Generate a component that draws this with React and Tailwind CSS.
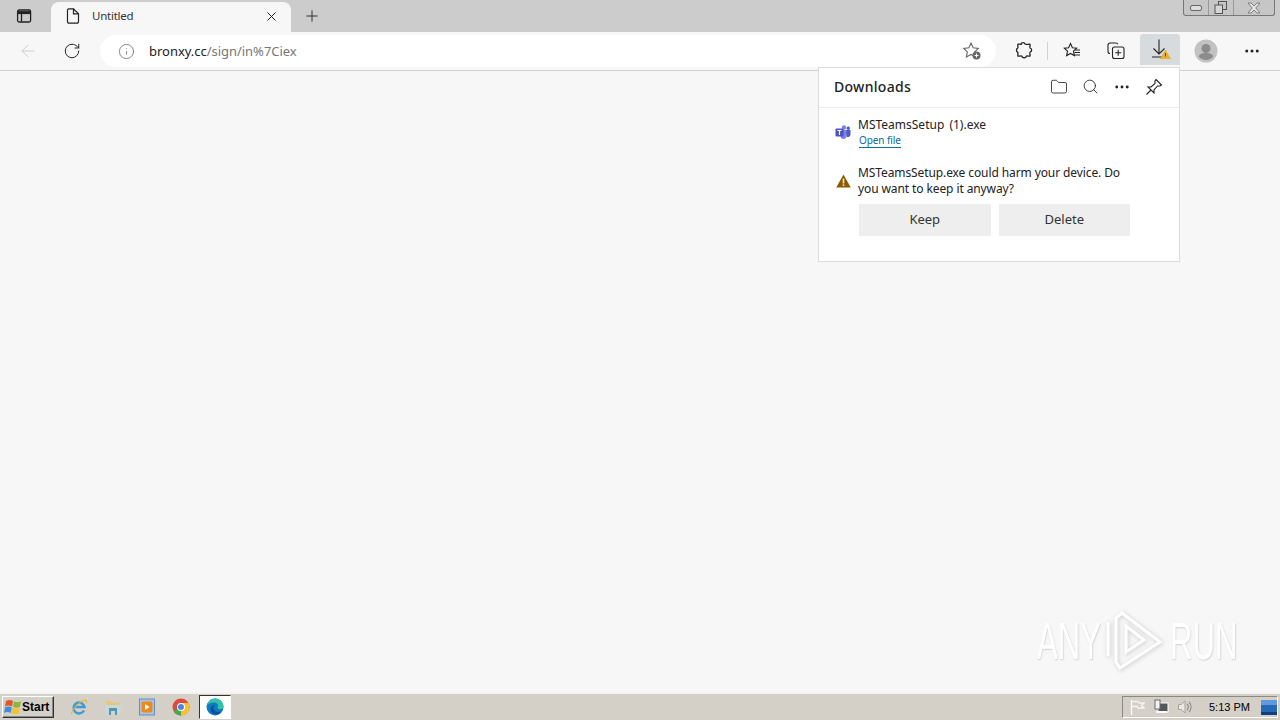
import { Plus, ArrowLeft, RotateCw, Info, MoreHorizontal, Search, Folder, X } from 'lucide-react';

const font = { fontFamily: '"Noto Sans", sans-serif' };

const TeamsIcon = () => (
  <svg width="16" height="14" viewBox="0 0 16 14">
    <circle cx="9" cy="2.5" r="2.2" fill="#7b83eb" />
    <circle cx="13.3" cy="3.2" r="1.7" fill="#5059c9" />
    <path d="M10 5h5.500v4.500a2.500 2.500 0 0 1-4 2z" fill="#5059c9" />
    <path d="M5 5h6.500v6a3 3 0 0 1-6 0z" fill="#7b83eb" />
    <rect x="0.5" y="3.5" width="8" height="8" rx="1" fill="#4b53bc" />
    <path d="M2.500 5.500h4M4.500 5.500v4.500" stroke="#fff" strokeWidth="1.2" />
  </svg>
);

const WarnIcon = () => (
  <svg width="15" height="14" viewBox="0 0 15 14">
    <path d="M7.500 .5L14.800 13.500H.2z" fill="#8a5a00" />
    <rect x="6.700" y="4.500" width="1.600" height="5" fill="#f6e7c0" />
    <rect x="6.700" y="10.400" width="1.600" height="1.600" fill="#f6e7c0" />
  </svg>
);

const TabPageIcon = () => (
  <svg width="14" height="16" viewBox="0 0 14 16" fill="none" stroke="#222" strokeWidth="1.2">
    <path d="M1.500 2.200a1.400 1.400 0 0 1 1.400-1.400h4.600l5 5v8a1.400 1.400 0 0 1-1.400 1.400H2.900a1.400 1.400 0 0 1-1.400-1.400z" />
    <path d="M7.500 .8v5h5" />
  </svg>
);

const TabsIcon = () => (
  <svg width="16" height="14" viewBox="0 0 16 14" fill="none" stroke="#222" strokeWidth="1.3">
    <rect x="1.600" y="1" width="13" height="12" rx="1.500" />
    <path d="M1.600 3.600h13" strokeWidth="3" />
    <path d="M5.500 4v9" />
  </svg>
);

const FavAddIcon = () => (
  <svg width="20" height="20" viewBox="0 0 20 20" fill="none">
    <path d="M9 2l2.200 4.800 5.100.6-3.700 3.500 1 5-4.600-2.500-4.600 2.500 1-5L1.700 7.400l5.100-.6z" stroke="#666" strokeWidth="1.1" />
    <circle cx="14.500" cy="14.500" r="4" fill="#666" />
    <path d="M12.500 14.500h4M14.500 12.500v4" stroke="#fff" strokeWidth="1.1" />
  </svg>
);

const ExtensionIcon = () => (
  <svg width="20" height="20" viewBox="0 0 20 20" fill="none" stroke="#222" strokeWidth="1.3">
    <path d="M7 3.200a2.200 2.200 0 0 1 4.200 0c.2.800 4.300-.4 4.800 0 .4.500-.6 3.300.1 3.800a2.200 2.200 0 0 1 0 4.200c-.7.500.3 3.300-.1 3.800-.5.400-2.800-.3-3.500 0a2.500 2.500 0 0 1-4.800 0c-.7-.3-3.300.4-3.800 0-.4-.5.400-3-.1-3.700a2.400 2.400 0 0 1 0-4.300c.5-.7-.3-3.300.1-3.800.5-.4 2.900.3 3.900-.2z" />
  </svg>
);

const FavListIcon = () => (
  <svg width="18" height="18" viewBox="0 0 18 18" fill="none" stroke="#222" strokeWidth="1.1">
    <path d="M7.500 1.500l1.900 4.200 4.300.5-3.200 3 .9 4.400-3.900-2.200-3.900 2.200.9-4.400-3.200-3 4.300-.5z" />
    <path d="M12 8h5M11.500 10.500h5.500M11 13h6" />
  </svg>
);

const CollectionsIcon = () => (
  <svg width="18" height="18" viewBox="0 0 18 18" fill="none" stroke="#222" strokeWidth="1.1">
    <path d="M3 11.500A2 2 0 0 1 1 9.500V3a2 2 0 0 1 2-2h6a2 2 0 0 1 1.800 1.200" />
    <rect x="5.500" y="5" width="11.500" height="11.500" rx="2" />
    <path d="M11.200 7.800v6M8.200 10.800h6" />
  </svg>
);

const DownloadWarn = () => (
  <svg width="22" height="22" viewBox="0 0 22 22" fill="none">
    <path d="M9 1.500v14M3.500 10.500L9 16l5.500-5.500M2 19h14" stroke="#222" strokeWidth="1.1" />
    <path d="M15.500 11.500l5.500 9.500H10z" fill="#eab12c" />
    <rect x="15" y="15" width="1" height="3.500" fill="#6b4a00" />
  </svg>
);

const PinIcon = () => (
  <svg width="18" height="18" viewBox="0 0 18 18" fill="none" stroke="#222" strokeWidth="1.1">
    <path d="M11 1.500L16.500 7 15 8l-2.500 0L9 12v3L3 9h3l4-3.500V3z" />
    <path d="M6 12l-4.500 4.500" />
  </svg>
);

const Avatar = () => (
  <svg width="24" height="24" viewBox="0 0 24 24">
    <circle cx="12" cy="12" r="11.500" fill="#c2c2c2" />
    <circle cx="12" cy="9.500" r="4.500" fill="#8c8c8c" />
    <path d="M4.600 17.500c1-2.600 3.800-3.500 7.400-3.500s6.400.9 7.400 3.500c-1.800 2.300-4.400 3.500-7.400 3.500s-5.600-1.200-7.400-3.500z" fill="#8c8c8c" />
  </svg>
);

const WinLogo = () => (
  <svg width="18" height="16" viewBox="0 0 18 16">
    <path d="M2 2c2.500-1.300 4.600-1.300 7 0L8 7.500C5.600 6.300 3.500 6.300 1 7.500z" fill="#e2552b" />
    <path d="M10 2.300c2.400 1.200 4.600 1.200 7 0l-1 5.500c-2.400 1.200-4.600 1.200-7 0z" fill="#8cb53a" />
    <path d="M1 8.500c2.500-1.200 4.400-1.200 6.800 0l-1 5.500c-2.400-1.200-4.400-1.200-6.800 0z" fill="#3f8ed8" />
    <path d="M8.800 8.700c2.400 1.200 4.600 1.200 7 0l-1 5.500c-2.400 1.200-4.600 1.200-7 0z" fill="#f2c230" />
  </svg>
);

const IeIcon = () => (
  <svg width="18" height="18" viewBox="0 0 18 18" fill="none">
    <path d="M14 12.500A5.500 5.500 0 1 1 14.500 9H4" stroke="#3d9ad6" strokeWidth="2.400" />
    <path d="M2 16c-1.500-2 6-12 13-14 2-.5 2 2 1 3" stroke="#e3b23c" strokeWidth="1.100" />
  </svg>
);

const ExplorerIcon = () => (
  <svg width="18" height="18" viewBox="0 0 18 18">
    <path d="M2 3h5l1 1.500h8V10H2z" fill="#e6c878" />
    <path d="M1 7h16l-1 10H2z" fill="#c4dadd" />
    <path d="M5 10h8v7h-2v-4H7v4H5z" fill="#5b93ad" />
  </svg>
);

const MediaIcon = () => (
  <svg width="16" height="18" viewBox="0 0 16 18">
    <rect x="0.5" y="1" width="15" height="16" fill="#a8c4e4" stroke="#5f8fc4" />
    <rect x="2.500" y="3.500" width="11" height="11" rx="2" fill="#ee8a1c" />
    <path d="M6 6l4.500 3L6 12z" fill="#fff" />
  </svg>
);

const ChromeIcon = () => (
  <svg width="18" height="18" viewBox="0 0 18 18">
    <circle cx="9" cy="9" r="8.500" fill="#dd4b3e" />
    <path d="M9 9L1.600 13.200A8.500 8.500 0 0 0 9 17.500z" fill="#4aa651" />
    <path d="M9 5h7.500A8.500 8.500 0 0 1 9 17.500z" fill="#f3c432" />
    <circle cx="9" cy="9" r="4" fill="#fff" />
    <circle cx="9" cy="9" r="3" fill="#4a86e0" />
  </svg>
);

const EdgeIcon = () => (
  <svg width="18" height="18" viewBox="0 0 18 18">
    <circle cx="9" cy="9" r="8.500" fill="#0f7ac6" />
    <path d="M1 8C2 3.500 5.200.5 9 .5c4.500 0 8.500 3.400 8.500 8 0 1.800-1.500 2.700-3.200 2.700-1.400 0-2.600-.5-2.600-1.200 0-1.800 1-1.800 0-3.500C10.800 5 9.300 4.500 8 4.500 4.500 4.500 2 6 1 8z" fill="#35c1a5" />
    <path d="M8 16c-2.800-1-4-3.500-3.200-6 .6-1.900 2.200-3 4-3-1.500 1-2 3-.8 5 1.500 2 4.800 2.600 7.400 1.200C14 16 11 17 8 16z" fill="#0b4f96" />
  </svg>
);

const FlagIcon = () => (
  <svg width="16" height="16" viewBox="0 0 16 16" fill="none" stroke="#fff" strokeWidth="1.300">
    <path d="M2.500 1v15" />
    <path d="M3 2.500h6l1 1.500h5l-2.500 2.500L15 9H9L8 7.500H3" stroke="#f4f4f2" />
  </svg>
);

const NetworkIcon = () => (
  <svg width="16" height="16" viewBox="0 0 16 16">
    <rect x="5" y="4" width="10" height="9" fill="#55585a" stroke="#fff" />
    <rect x="2" y="1" width="5" height="9" fill="#f2f2f0" stroke="#66686a" />
    <rect x="3" y="12" width="11" height="2" fill="#fafafa" />
  </svg>
);

const SpeakerIcon = () => (
  <svg width="16" height="16" viewBox="0 0 16 16" fill="none">
    <path d="M1.500 5.500h3L8 2v12l-3.500-3.500h-3z" fill="#e9e8e4" stroke="#a5a39c" />
    <path d="M10 5a4 4 0 0 1 0 6M12 3a7 7 0 0 1 0 10" stroke="#8f8d86" strokeWidth="1.100" />
  </svg>
);

const DesktopIcon = () => (
  <svg width="16" height="15" viewBox="0 0 16 15">
    <rect x="0" y="0" width="16" height="13" fill="#2668b8" />
    <rect x="0" y="0" width="16" height="5" fill="#5f9bdc" />
    <rect x="0" y="12" width="16" height="3" fill="#123f78" />
  </svg>
);

const Watermark = () => (
  <div
    className="absolute left-[1037px] top-[608px] w-[198px] h-[66px] flex items-center pointer-events-none text-white text-[52px] leading-none [text-shadow:1px_1px_2px_#d0d0d0]"
    style={{ fontFamily: '"Liberation Sans", sans-serif' }}
  >
    <span className="w-[69px] scale-x-[0.6] origin-left whitespace-nowrap">ANY</span>
    <svg width="58" height="62" viewBox="0 0 58 62" fill="none" stroke="#fff" strokeWidth="3" className="drop-shadow-[1px_1px_2px_#c8c8c8]">
      <path d="M10 8v44l4 6L54 32 16 3z" />
      <path d="M2 12v34" />
      <path d="M20 16v26l18-12z" />
    </svg>
    <span className="ml-[6px] w-[64px] scale-x-[0.6] origin-left whitespace-nowrap">RUN</span>
  </div>
);

const App = () => {
  return (
    <div className="relative w-[1280px] h-[720px] overflow-hidden flex flex-col bg-[#f7f7f7] text-[#222]" style={font}>
      {/* Tab strip */}
      <div className="h-[32px] bg-[#cccccc] flex items-end shrink-0 relative">
        <div className="w-[51px] h-[32px] flex items-center justify-center pr-[4px] pb-[1px]">
          <TabsIcon />
        </div>
        <div className="w-[240px] h-[30px] bg-[#f7f7f7] rounded-t-[8px] flex items-center pl-[15px] pr-[12px] pb-[2px]">
          <TabPageIcon />
          <span className="ml-[12px] text-[11.5px] tracking-[-0.25px] text-[#333] flex-1">Untitled</span>
          <X size={15} strokeWidth={1.6} color="#222" />
        </div>
        <div className="w-[42px] h-[32px] flex items-center justify-center pb-[1px]">
          <Plus size={18} strokeWidth={1.2} color="#222" />
        </div>
        {/* Window controls */}
        <div className="absolute right-[5px] top-0 h-[16px] w-[92px] flex border border-t-0 border-[#777] rounded-b-[3px] bg-[#c6c6c6]">
          <div className="w-[25px] flex items-center justify-center border-r border-[#999]">
            <div className="w-[12px] h-[6px] border border-[#666] rounded-[2px] bg-[#ddd]" />
          </div>
          <div className="w-[25px] flex items-center justify-center border-r border-[#999] pr-[2px]">
            <svg width="13" height="13" viewBox="0 0 13 13" fill="none" stroke="#555">
              <rect x="4.500" y="0.500" width="8" height="8" />
              <rect x="1" y="4" width="7.500" height="8.500" fill="#d6d6d6" />
            </svg>
          </div>
          <div className="flex-1 flex items-center justify-center">
            <svg width="14" height="12" viewBox="0 0 14 12" fill="#e4e4e4" stroke="#777" strokeWidth="0.9">
              <path d="M1 1h3l3 3 3-3h3L8.800 6 13 11h-3L7 8l-3 3H1l4.200-5z" />
            </svg>
          </div>
        </div>
      </div>

      {/* Toolbar */}
      <div className="h-[39px] shrink-0 bg-[#f7f7f7] border-b border-[#d2d2d2] flex items-center relative">
        <div className="w-[56px] flex justify-center">
          <ArrowLeft size={20} strokeWidth={1.1} color="#c9c9c9" />
        </div>
        <div className="w-[32px] flex justify-center">
          <RotateCw size={18} strokeWidth={1.3} color="#222" />
        </div>
        <div className="ml-[12px] w-[896px] h-[32px] bg-white rounded-full flex items-center pl-[18px] pr-[14px]">
          <Info size={17} strokeWidth={1.1} color="#666" />
          <span className="ml-[14px] text-[13px] flex-1 pt-[1px] tracking-[-0.03px]">
            <span className="text-[#222]">bronxy.cc</span>
            <span className="text-[#777]">/sign/in%7Ciex</span>
          </span>
          <FavAddIcon />
        </div>
        <div className="w-[56px] flex justify-center pr-[1px]">
          <ExtensionIcon />
        </div>
        <div className="w-[1px] h-[18px] bg-[#d2d2d2] -ml-[5px]" />
        <div className="w-[48px] flex justify-center">
          <FavListIcon />
        </div>
        <div className="w-[40px] flex justify-center">
          <CollectionsIcon />
        </div>
        <div className="w-[40px] h-[31px] ml-[4px] mt-[-4px] bg-[#d8dbdd] rounded-t-[3px] flex items-center justify-center pl-[1px]">
          <DownloadWarn />
        </div>
        <div className="w-[52px] flex justify-center">
          <Avatar />
        </div>
        <div className="w-[40px] flex justify-center">
          <MoreHorizontal size={18} strokeWidth={2} color="#222" />
        </div>
      </div>

      {/* Page */}
      <div className="flex-1 bg-[#f7f7f7]" />

      {/* Taskbar */}
      <div className="h-[28px] shrink-0 bg-[#d4d0c8] border-t-2 border-[#f4f3ef] flex items-center">
        <div className="ml-[2px] w-[52px] h-[22px] bg-[#d4d0c8] border border-[#fff] border-r-[#333] border-b-[#333] shadow-[inset_-1px_-1px_0_#888] flex items-center pl-[1px]">
          <WinLogo />
          <span className="text-[12px] font-bold text-black leading-none" style={{ fontFamily: '"Liberation Sans", sans-serif' }}>Start</span>
        </div>
        <div className="ml-[16px] w-[18px] flex justify-center"><IeIcon /></div>
        <div className="ml-[16px] w-[18px] flex justify-center"><ExplorerIcon /></div>
        <div className="ml-[16px] w-[18px] flex justify-center"><MediaIcon /></div>
        <div className="ml-[16px] w-[18px] flex justify-center"><ChromeIcon /></div>
        <div className="ml-[9px] w-[32px] h-[24px] bg-white border border-[#333] border-r-white border-b-white flex items-center justify-center"><EdgeIcon /></div>

        <div className="ml-auto mr-[2px] w-[156px] h-[22px] border border-[#8a8a84] border-r-white border-b-white flex items-center pl-[6px]">
          <FlagIcon />
          <span className="w-[8px]" />
          <NetworkIcon />
          <span className="w-[8px]" />
          <SpeakerIcon />
          <span className="ml-[16px] text-[11px] text-black w-[52px]" style={{ fontFamily: '"Liberation Sans", sans-serif' }}>5:13 PM</span>
          <DesktopIcon />
        </div>
      </div>

      {/* Downloads flyout */}
      <div className="absolute left-[818px] top-[67px] w-[362px] h-[195px] bg-white border border-[#dcdcdc]">
        <div className="h-[40px] border-b border-[#ececec] flex items-center pl-[15px] pr-[16px] pb-[2px]">
          <span className="text-[14px] tracking-[0.3px] font-medium text-[#222] flex-1">Downloads</span>
          <div className="flex items-center gap-[14px]">
            <Folder size={18} strokeWidth={1.1} color="#222" />
            <Search size={17} strokeWidth={1.2} color="#222" />
            <MoreHorizontal size={18} strokeWidth={1.8} color="#222" />
            <PinIcon />
          </div>
        </div>
        <div className="flex pl-[16px] pt-[9px]">
          <div className="w-[23px] pt-[8px]"><TeamsIcon /></div>
          <div>
            <div className="text-[12px] leading-[16px] text-[#222] [word-spacing:2px]">MSTeamsSetup (1).exe</div>
            <div className="text-[10px] leading-[14px] ml-[1px] tracking-[-0.1px] text-[#0b6a9e] border-b border-[#0b6a9e] w-fit">Open file</div>
          </div>
        </div>
        <div className="flex pl-[17px] pt-[17px]">
          <div className="w-[22px] pt-[9px]"><WarnIcon /></div>
          <div className="w-[272px]">
            <div className="text-[12px] leading-[16px] tracking-[-0.1px] text-[#222]">MSTeamsSetup.exe could harm your device. Do you want to keep it anyway?</div>
            <div className="flex gap-[8px] mt-[7px] ml-[1px]">
              <button className="w-[132px] h-[32px] bg-[#eeeeee] text-[13px] text-[#333]">Keep</button>
              <button className="w-[132px] h-[32px] bg-[#eeeeee] text-[13px] text-[#333]">Delete</button>
            </div>
          </div>
        </div>
      </div>

      <Watermark />
    </div>
  );
};

export default App;
